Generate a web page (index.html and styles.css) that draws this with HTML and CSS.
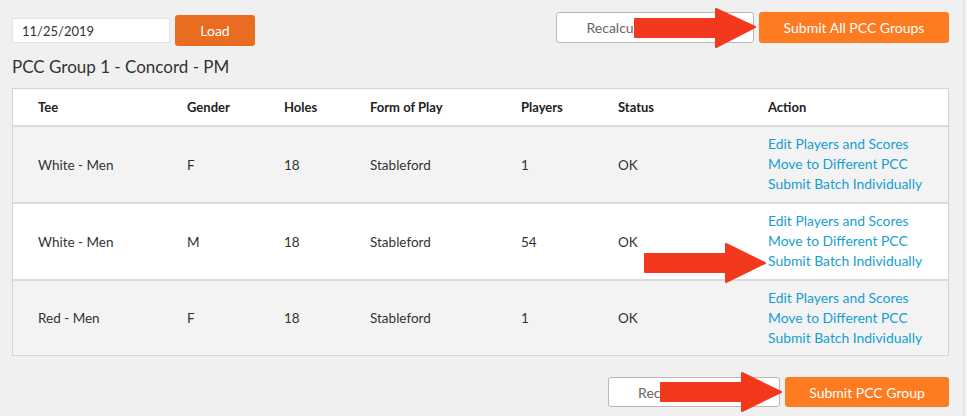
FILE: index.html
```html
<!DOCTYPE html>
<html>
<head>
<meta charset="utf-8">
<link rel="stylesheet" href="styles.css">
</head>
<body>
<div class="page">
  <div class="topbar">
    <div class="left-tools">
      <input class="date" type="text" value="11/25/2019">
      <button class="btn btn-load">Load</button>
    </div>
    <div class="right-tools">
      <button class="btn btn-outline btn-recalc-all">Recalculate All Groups</button>
      <button class="btn btn-submit btn-submit-all">Submit All PCC Groups</button>
    </div>
  </div>

  <h2 class="group-title">PCC Group 1 - Concord - PM</h2>

  <div class="table">
    <div class="row head">
      <div>Tee</div><div>Gender</div><div>Holes</div><div>Form of Play</div><div>Players</div><div>Status</div><div>Action</div>
    </div>
    <div class="row shade">
      <div>White - Men</div><div>F</div><div>18</div><div>Stableford</div><div>1</div><div>OK</div>
      <div class="actions"><a>Edit Players and Scores</a><a>Move to Different PCC</a><a>Submit Batch Individually</a></div>
    </div>
    <div class="row">
      <div>White - Men</div><div>M</div><div>18</div><div>Stableford</div><div>54</div><div>OK</div>
      <div class="actions"><a>Edit Players and Scores</a><a>Move to Different PCC</a><a>Submit Batch Individually</a></div>
    </div>
    <div class="row shade last">
      <div>Red - Men</div><div>F</div><div>18</div><div>Stableford</div><div>1</div><div>OK</div>
      <div class="actions"><a>Edit Players and Scores</a><a>Move to Different PCC</a><a>Submit Batch Individually</a></div>
    </div>
  </div>

  <div class="bottombar">
    <button class="btn btn-outline btn-recalc">Recalculate Group</button>
    <button class="btn btn-submit btn-submit-one">Submit PCC Group</button>
  </div>

  <svg class="arrow arrow-top" viewBox="0 0 123 40" width="123" height="40"><path d="M2 11 H83 V1 L122 19 L83 39 V29 H2 Z" fill="#f3391d" stroke="#f3391d" stroke-width="2" stroke-linejoin="round"/></svg>
  <svg class="arrow arrow-mid" viewBox="0 0 123 40" width="123" height="40"><path d="M2 11 H83 V1 L122 20 L83 39 V29 H2 Z" fill="#f3391d" stroke="#f3391d" stroke-width="2" stroke-linejoin="round"/></svg>
  <svg class="arrow arrow-bot" viewBox="0 0 123 40" width="123" height="40"><path d="M2 11 H83 V1 L122 20 L83 39 V29 H2 Z" fill="#f3391d" stroke="#f3391d" stroke-width="2" stroke-linejoin="round"/></svg>
</div>
</body>
</html>
```

FILE: styles.css
```css
html, body {
  margin: 0;
  padding: 0;
  background: #f0f0f0;
}
body {
  font-family: Lato, "Open Sans", Arial, sans-serif;
  color: #333;
  font-size: 13px;
}
.page {
  position: relative;
  width: 963px;
  height: 416px;
  border-right: 1px solid #e2e2e2;
  box-sizing: content-box;
  padding: 0;
}
.topbar {
  display: flex;
  justify-content: space-between;
  align-items: flex-start;
  padding: 12px 14px 0 12px;
  height: 34px;
}
.left-tools {
  display: flex;
  align-items: center;
  gap: 5px;
  margin-top: 3px;
}
.date {
  width: 158px;
  height: 25px;
  box-sizing: border-box;
  border: 1px solid #e4e4e4;
  background: #fff;
  font-family: inherit;
  font-size: 13px;
  color: #333;
  padding: 0 0 0 9px;
  margin: 0;
  outline: none;
}
.btn {
  font-family: inherit;
  font-size: 14px;
  border-radius: 3px;
  height: 31px;
  box-sizing: border-box;
  margin: 0;
  cursor: pointer;
  padding: 0;
}
.btn-load {
  width: 80px;
  background: #e96c21;
  color: #fff;
  border: none;
}
.right-tools {
  display: flex;
  gap: 5px;
}
.btn-outline {
  background: #fff;
  border: 1px solid #b9b9b9;
  color: #666;
}
.btn-submit {
  background: #ff7b22;
  border: none;
  color: #fff;
}
.btn-recalc-all { width: 198px; }
.btn-submit-all { width: 190px; }

.group-title {
  margin: 0;
  padding: 0 12px;
  font-size: 17px;
  font-weight: normal;
  color: #333;
  line-height: 20px;
  height: 42px;
  padding-top: 11px;
  box-sizing: border-box;
}

.table {
  margin-left: 12px;
  width: 937px;
  border: 1px solid #d4d4d4;
  box-sizing: border-box;
  background: #fff;
}
.row {
  display: grid;
  grid-template-columns: 149px 97px 86px 151px 97px 150px 1fr;
  padding-left: 25px;
  align-items: center;
  height: 77px;
  border-top: 2px solid #dcdcdc;
  box-sizing: border-box;
  background: #fff;
  font-size: 13.5px;
}
.row.shade { background: #f3f3f3; }
.row.head {
  border-top: none;
  height: 36px;
  font-weight: bold;
  font-size: 13px;
  color: #222;
  padding-bottom: 1px;
}
.row.last { height: 76px; }
.actions {
  display: flex;
  flex-direction: column;
  line-height: 20px;
  font-size: 13.9px;
  margin-top: -1px;
}
.actions a {
  color: #169ed3;
  text-decoration: none;
  cursor: pointer;
}

.bottombar {
  display: flex;
  justify-content: flex-end;
  gap: 5px;
  padding: 21px 14px 0 0;
}
.btn-recalc { width: 172px; height: 30px; }
.btn-submit-one { width: 164px; height: 30px; }

.arrow {
  position: absolute;
  display: block;
}
.arrow-top { left: 633px; top: 8px; }
.arrow-mid { left: 643px; top: 243px; }
.arrow-bot { left: 659px; top: 372px; }
```
